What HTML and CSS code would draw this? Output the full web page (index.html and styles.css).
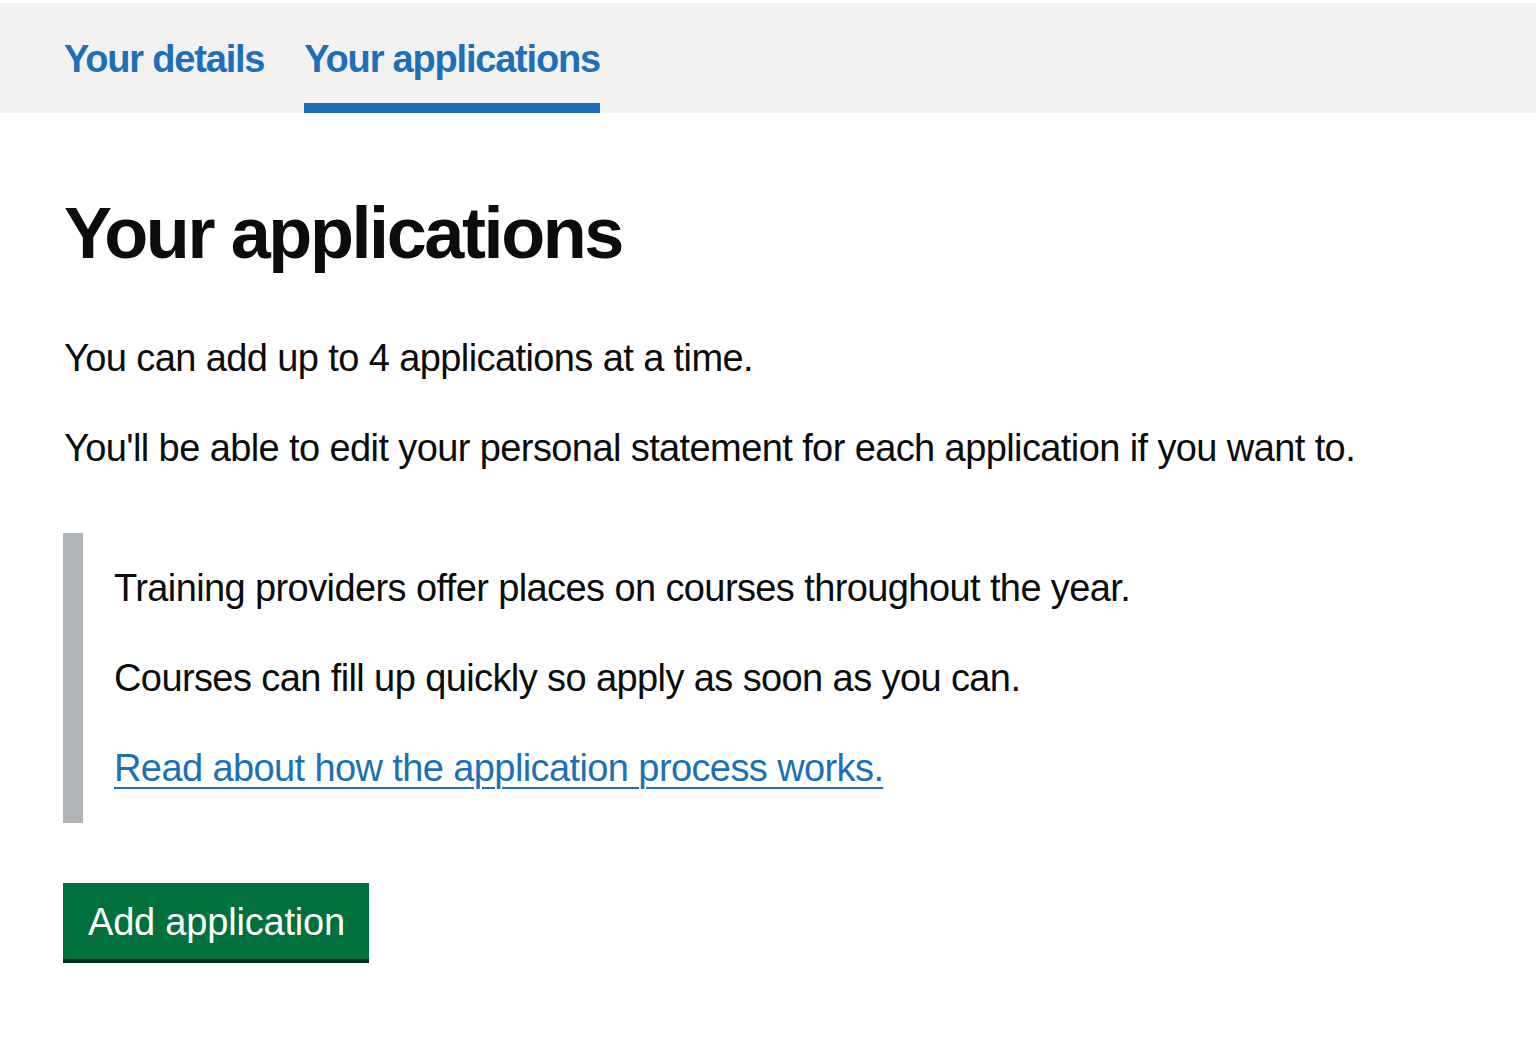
FILE: index.html
```html
<!DOCTYPE html>
<html lang="en">
<head>
<meta charset="utf-8">
<title>Your applications</title>
<link rel="stylesheet" href="styles.css">
</head>
<body>
<nav class="service-nav">
  <ul class="service-nav__list">
    <li class="service-nav__item"><a class="service-nav__link" href="#">Your details</a></li>
    <li class="service-nav__item service-nav__item--active"><a class="service-nav__link" href="#">Your applications</a></li>
  </ul>
</nav>
<main class="main">
  <h1 class="heading-l">Your applications</h1>
  <p class="body">You can add up to 4 applications at a time.</p>
  <p class="body">You'll be able to edit your personal statement for each application if you want to.</p>
  <div class="inset">
    <p class="body">Training providers offer places on courses throughout the year.</p>
    <p class="body">Courses can fill up quickly so apply as soon as you can.</p>
    <p class="body"><a class="link" href="#">Read about how the application process works.</a></p>
  </div>
  <a class="button" href="#">Add application</a>
</main>
</body>
</html>
```
FILE: styles.css
```css
html, body {
  margin: 0;
  padding: 0;
  background: #ffffff;
}
body {
  font-family: "Liberation Sans", Arial, sans-serif;
  color: #0b0c0c;
  padding-top: 3px;
}
.service-nav {
  background: #f3f2f1;
  height: 110px;
}
.service-nav__list {
  list-style: none;
  margin: 0;
  padding: 0 0 0 64px;
  display: flex;
  gap: 40px;
  height: 100%;
}
.service-nav__item {
  box-sizing: border-box;
  height: 110px;
  padding-top: 31px;
}
.service-nav__item--active {
  border-bottom: 10px solid #1d70b8;
}
.service-nav__link {
  font-size: 38px;
  line-height: 50px;
  font-weight: 700;
  letter-spacing: -1.2px;
  color: #1d70b8;
  text-decoration: none;
  display: block;
}
.main {
  padding: 80px 64px 60px 63px;
}
.heading-l {
  margin: 0 0 60px 1px;
  font-size: 72px;
  line-height: 80px;
  font-weight: 700;
  letter-spacing: -2.4px;
}
.body {
  margin: 0 0 40px 1px;
  font-size: 38px;
  line-height: 50px;
  letter-spacing: -0.6px;
}
.inset {
  margin: 60px 0;
  padding: 30px 30px 30px 31px;
  border-left: 20px solid #b1b4b6;
}
.inset .body {
  margin-left: 0;
}
.inset .body:last-child {
  margin-bottom: 0;
}
.link {
  color: #1d70b8;
  text-decoration: underline;
  text-decoration-thickness: 2px;
  text-underline-offset: 6px;
}
.button {
  display: inline-block;
  box-sizing: border-box;
  background: #00703c;
  color: #ffffff;
  font-size: 38px;
  line-height: 38px;
  letter-spacing: -0.2px;
  padding: 16px 20px 14px 21px;
  border: 4px solid transparent;
  box-shadow: 0 4px 0 #002d18;
  text-decoration: none;
}
```
